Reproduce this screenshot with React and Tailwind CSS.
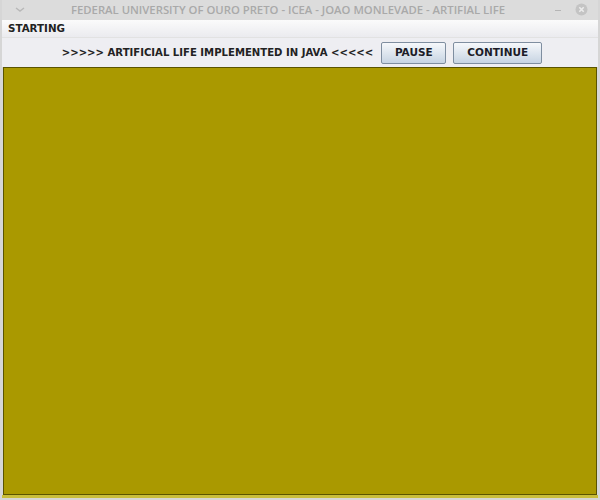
import React from 'react';

const TitleBar = () => (
  <div className="relative flex h-[20px] items-center justify-center bg-[#dcdcdc] pr-[24px]">
    <svg className="absolute left-[13px] top-[7px]" width="10" height="6" viewBox="0 0 10 6">
      <path d="M1 1 L5 4 L9 1" stroke="#b8b8b8" strokeWidth="1.4" fill="none" />
    </svg>
    <span
      className="text-[11.3px] font-semibold text-[#a9a9a9] leading-none"
      style={{ fontFamily: '"Open Sans", sans-serif' }}
    >
      FEDERAL UNIVERSITY OF OURO PRETO - ICEA - JOAO MONLEVADE - ARTIFIAL LIFE
    </span>
    <div className="absolute right-[10px] top-[3px] flex items-center gap-[14px]">
      <div className="h-[1px] w-[6px] bg-[#b5b5b5] mt-[1px]" />
      <svg width="13" height="13" viewBox="0 0 13 13">
        <circle cx="6.5" cy="6.5" r="6" fill="#c4c4c4" />
        <path d="M4.3 4.3 L8.7 8.7 M8.7 4.3 L4.3 8.7" stroke="#ececec" strokeWidth="1.6" />
      </svg>
    </div>
  </div>
);

const Button = ({ label, width }) => (
  <button
    className={`h-[22px] ${width} rounded-[2px] border border-[#7f8ea0] bg-gradient-to-b from-[#f6f8fb] to-[#c7d4e2] text-[10.5px] font-bold text-[#1c1c28] leading-none`}
  >
    {label}
  </button>
);

export default function App() {
  return (
    <div
      className="flex h-[500px] w-[600px] flex-col bg-[#d6d6d6] px-[2px]"
      style={{ fontFamily: '"DejaVu Sans", sans-serif' }}
    >
      <TitleBar />
      <div className="flex h-[18px] items-center bg-gradient-to-b from-[#fbfbfb] to-[#ebebef] border-b border-[#e2e2e2] px-[6px]">
        <span className="text-[10.3px] font-bold text-[#222]">STARTING</span>
      </div>
      <div className="flex h-[29px] items-center justify-center gap-[7px] bg-[#eeeef2] pl-[4px]">
        <span className="mr-[1px] text-[10.1px] font-bold text-[#222]">&gt;&gt;&gt;&gt;&gt; ARTIFICIAL LIFE IMPLEMENTED IN JAVA &lt;&lt;&lt;&lt;&lt;</span>
        <Button label="PAUSE" width="w-[65px]" />
        <Button label="CONTINUE" width="w-[89px]" />
      </div>
      <div className="flex-1 border border-[#5a5400] bg-[#aa9900] mx-[1px]" />
      <div className="h-[3px] bg-[#c9be3c]" />
      <div className="h-[2px] bg-[#d6d6d6]" />
    </div>
  );
}
